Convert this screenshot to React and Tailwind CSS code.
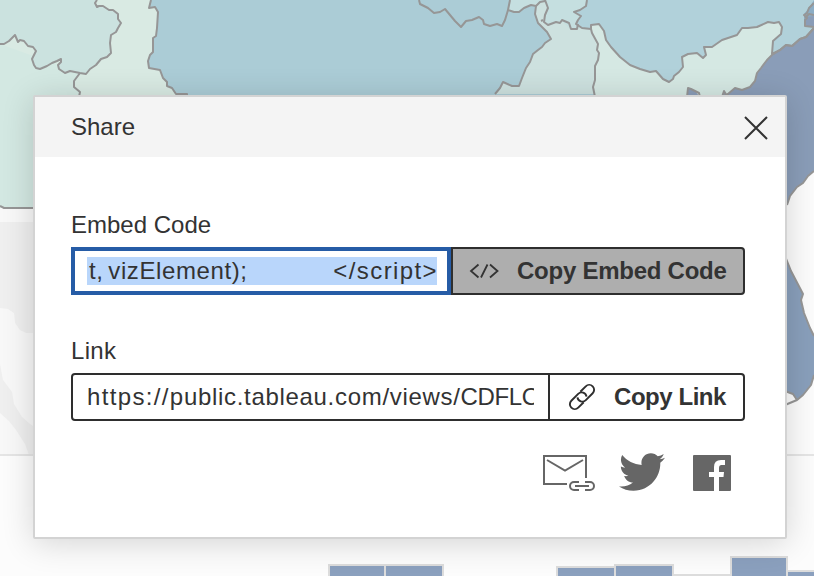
import React from "react";
import { FaTwitter } from "react-icons/fa";

const PLAINS = "M151 0 149 8 155 7 158 12 157 28 156 36 153 38 153 52 150 55 148 61 149 68 160 70 163 78 167 82 167 86 172 88 176 94 187 94 187 98";
const NORTHWEST = "M97 0 95 3 97 7 99 6 103 6 109 10 113 10 118 14 118 19 121 23 118 28 116 32 111 35 110 43 111 53 107 57 101 59 96 65 90 69 86 74 80 73 70 71 65 73 59 69 58 65 61 62 61 59 57 61 52 63 47 66 40 69 36 68 34 65 32 59 36 51 33 47 28 46 24 41 20 40 18 42 15 35 9 41 4 44 0 44";
const MIDWEST = "M510 0 508 10 514 12 519 12 524 8 531 5 536 6 535 14 538 23 547 32 551 39 545 43 542 47 538 50 533 54 530 62 526 68 522 78 519 86 512 86 503 82 500 88 495 94";
const LAKES = "M587 0 586 6 580 10 574 12 581 16 578 20 576 24 582 28 591 29 591 25 599 24 604 31 606 40 611 47 620 57 630 65 640 69 650 72 656 71 663 79 669 82 673 79 674 76 679 72 683 67 682 57 688 54 697 53 703 58 706 55 704 47 712 47 722 40 737 35 742 28 748 28 757 27 768 22 774 23 779 22 782 27 781 34 773 41 772 54 780 50 786 45 792 46 800 39 806 37 814 28";
const COAST = "M814 28 806 37 800 39 792 46 786 45 780 50 772 55 767 60 761 68 757 73 755 81 750 87 742 90 735 88 728 94 722 97";

function MapBackdrop() {
  return (
    <svg className="absolute inset-0" width="814" height="576" viewBox="0 0 814 576" aria-hidden="true">
      <rect width="814" height="576" fill="#fcfcfc" />
      <rect y="208" width="60" height="247" fill="#f8f8f8" />
      <path d="M0 222H40V333H26L20 330 15 323 14 313 8 309 0 308Z" fill="#efefef" />
      <path d="M0 364 3 380 12 392 14 404 22 417 30 424 40 431V455H29L25 444 16 430 9 421 0 413Z" fill="#efefef" />
      <rect y="454" width="814" height="2" fill="#e5e5e5" />
      <path d="M0 0H160L187 98H60V208H0Z" fill="#d9eae3" />
      <path d="M0 44 80 73 74 81 74 87 80 92V208H4L0 206Z" fill="#d3e8e2" />
      <path d={NORTHWEST + "V0Z"} fill="#cbe2df" />
      <path d={PLAINS + "H600V0Z"} fill="#abccd6" />
      <path d={MIDWEST + "H814V0Z"} fill="#cde1df" />
      <path d="M510 0 508 10 514 12 519 12 524 8 531 5 538 3 545 0Z" fill="#c5dfe0" />
      <path d="M545 0 548 8 544 22 548 25 562 21 570 29 582 28 587 0Z" fill="#c5dfe0" />
      <path d="M591 25 592 33 598 49 598 60 595 66 593 87 595 97H800V20Z" fill="#d5e8e3" />
      <path d={LAKES + "V0Z"} fill="#b1d1da" />
      <path d={COAST + "H814V28Z"} fill="#8a9db8" />
      <path d="M780 90H814V171L808 176 803 183 797 187 790 196 787 205H780Z" fill="#8a9db8" />
      <path d="M780 255 787 261 791 271 803 294 801 300 804 313 810 328 814 336V375L811 385 803 395 798 400 793 394 780 391Z" fill="#899fbb" />
      <path d="M814 0 809 8 804 14 804 26H814Z" fill="#8cadc5" />
      <path d="M806 17 814 16V27H806Z" fill="#8a9db8" />
      <path d="M687 97 688 88 695 91 700 97ZM721 97 724 91 727 97Z" fill="#8a9db8" />
      <g fill="none" stroke="#969696" strokeWidth="2" strokeLinejoin="round">
        <path d={NORTHWEST} />
        <path d="M80 73 74 81 74 87 80 92 79 97" />
        <path d={PLAINS} />
        <path d="M419 0 420 4 428 8 434 13 440 12 445 9 450 15 455 21 461 27 466 21 472 20 479 17 483 20 484 24 490 26 497 24 502 26 505 20 508 10" />
        <path d={MIDWEST} />
        <path d="M536 6 540 2 545 1M545 0 548 8 545 15 544 22 548 25 556 22 560 23 562 20 569 23 571 29 577 29 578 24" />
        <path d={LAKES} />
        <path d="M591 29 592 33 598 44 597 50 599 53 598 60 595 66 595 80 593 87 595 97" />
        <path d={COAST} />
        <path d="M814 3 809 8 807 13 804 15 807 18 805 20 805 26 814 27M805 18 809 14 814 15" />
        <path d="M687 97 688 88 691 89 695 91 699 93 700 97M722 97 724 91 727 96" />
        <path d="M814 171 808 176 803 183 797 187 790 196 787 205M785 256 791 271 803 294 801 300 804 313 810 328 814 336M814 375 811 385 803 395 797 400 785 405M785 391 793 394 797 400M0 206 4 208H36" />
        <path d="M541 21 543 20" />
      </g>
      <g fill="#8ba0be" stroke="#dcdcdc" strokeWidth="2">
        <path d="M329 580V565H385V580ZM385 580V565H443V580ZM557 580V567H615V580ZM615 580V565H673V580ZM731 580V557H787V580ZM787 580V571H820V580Z" />
        <path d="M673 575H731" />
      </g>
    </svg>
  );
}

function CodeIcon() {
  return (
    <svg width="30" height="16" viewBox="0 0 30 16" fill="none" stroke="#333" strokeWidth="1.800">
      <path d="M9.500 1.500 2 8 9.500 14.500M18.500 1.500 12 14.500M21 1.500 28.500 8 21 14.500" />
    </svg>
  );
}

function ChainIcon() {
  return (
    <svg width="28" height="28" viewBox="0 0 28 28" fill="none" stroke="#2e2e2e" strokeWidth="1.900" className="shrink-0">
      <g transform="translate(14 14) rotate(-45)">
        <path d="M2.500 -4.900H10.200A4.900 4.900 0 0 1 10.200 4.900H.5A4.900 4.900 0 0 1 -3.400 -3" />
        <path d="M-2.500 4.900H-10.200A4.900 4.900 0 0 1 -10.200 -4.900H-.5A4.900 4.900 0 0 1 3.400 3" />
      </g>
    </svg>
  );
}

function MailIcon() {
  return (
    <svg width="54" height="38" viewBox="0 0 54 38" fill="none" stroke="#666" strokeWidth="2" className="shrink-0">
      <path d="M25 31H2V3H44V25M5 7 23 17.500 41 7" />
      <path d="M37 29H32A4 4 0 0 0 32 37H37M43 29H48A4 4 0 0 1 48 37H43M33 33H47" />
    </svg>
  );
}

function FacebookIcon() {
  return (
    <svg width="38" height="36" viewBox="0 0 38 36" fill="#666">
      <path fillRule="evenodd" d="M1 0H37Q38 0 38 1V35Q38 36 37 36H26V22H30.500L31 17H26V13Q26 10 28.500 10H32V5H28Q21 5 21 12V17H16V22H21V36H1Q0 36 0 35V1Q0 0 1 0Z" />
    </svg>
  );
}

export default function App() {
  return (
    <div className="relative h-[576px] w-[814px] overflow-hidden font-['Liberation_Sans',sans-serif] text-2xl leading-7 text-[#333]">
      <MapBackdrop />
      <div role="dialog" className="relative ml-[33px] mt-[95px] flex h-[444px] w-[754px] flex-col rounded-xs border-2 border-[#d3d3d3] bg-white shadow-[0_4px_32px_rgba(0,0,0,0.16)]">
        <header className="flex h-[60px] items-center justify-between bg-[#f4f4f4] pl-9 pr-[17px]">
          <h1>Share</h1>
          <svg width="24" height="24" viewBox="0 0 24 24" className="mt-0.5" stroke="#333" strokeWidth="2">
            <path d="M1 1 23 23M23 1 1 23" />
          </svg>
        </header>
        <main className="flex flex-col pl-9 pr-10 pt-[54px]">
          <label>Embed Code</label>
          <div className="mt-2 flex h-12">
            <div className="flex w-[380px] items-center border-4 border-[#265ca6] pl-3">
              <div className="flex h-7 w-[350px] justify-between overflow-hidden bg-[#b9d6fb]">
                <span className="ml-0.5 whitespace-pre tracking-[0.6px] [word-spacing:-2.5px]">t, vizElement);</span>
                <span className="-mr-px tracking-[1.4px]">&lt;/script&gt;</span>
              </div>
            </div>
            <button className="flex w-[294px] items-center rounded-r border-2 border-[#2e2e2e] bg-[#aeaeae] pl-4 font-bold">
              <CodeIcon />
              <span className="ml-[18px] whitespace-nowrap tracking-[-0.25px]">Copy Embed Code</span>
            </button>
          </div>
          <label className="mt-[42px] tracking-[0.3px]">Link</label>
          <div className="mt-2 flex h-12 rounded border-2 border-[#2e2e2e]">
            <div className="flex w-[475px] items-center pl-3.5">
              <div className="w-[447px] overflow-hidden whitespace-nowrap">
                <span className="tracking-[1.35px]">https://</span>
                <span className="tracking-[0.69px]">public.tableau.com/views/</span>
                <span className="tracking-[-0.4px]">CDFLO</span>
              </div>
            </div>
            <button className="flex flex-1 items-center border-l-2 border-[#2e2e2e] pl-[18px] font-bold">
              <ChainIcon />
              <span className="ml-[18px] whitespace-nowrap tracking-[-0.45px]">Copy Link</span>
            </button>
          </div>
          <div className="mt-[31px] flex h-10 items-center pl-[471px]">
            <MailIcon />
            <FaTwitter className="ml-[23px] shrink-0 text-[#666]" size={46} />
            <div className="ml-7 mt-0.5"><FacebookIcon /></div>
          </div>
        </main>
      </div>
    </div>
  );
}
